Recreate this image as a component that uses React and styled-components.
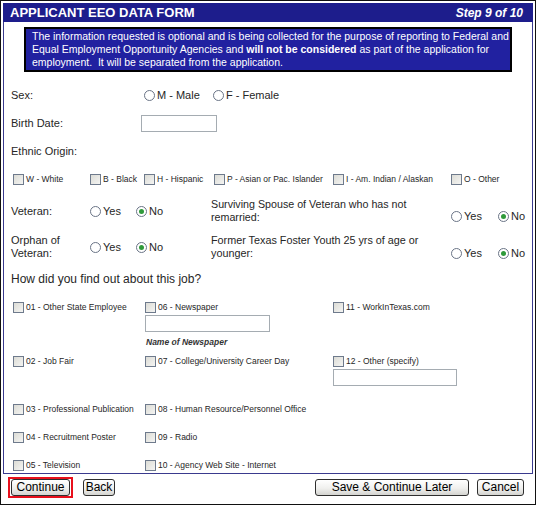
import React from 'react';
import styled, { createGlobalStyle } from 'styled-components';

const Global = createGlobalStyle`
  html, body { margin: 0; padding: 0; background: #fff; }
  body { font-family: "Liberation Sans", Arial, sans-serif; color: #262626; }
  * { box-sizing: border-box; }
`;

const Frame = styled.div`
  width: 536px;
  height: 505px;
  border: 1px solid #111;
  padding: 2px 0 0 2px;
  display: flex;
  flex-direction: column;
`;

const Panel = styled.div`
  width: 530px;
  height: 471px;
  border: 1px solid #3a3a8e;
  border-top: none;
  display: flex;
  flex-direction: column;
`;

const Header = styled.div`
  height: 19px;
  margin: 0 -1px;
  background: #1d1d8c;
  color: #fff;
  display: flex;
  align-items: center;
  justify-content: space-between;
  padding: 0 10px 0 7px;
`;

const Title = styled.span`
  font-size: 13px;
  font-weight: bold;
`;

const Step = styled.span`
  font-size: 12px;
  font-weight: bold;
  font-style: italic;
`;

const Notice = styled.div`
  margin: 5px 0 0 20px;
  width: 488px;
  border: 2px solid #000;
  background: #2121a0;
  color: #fff;
  font-size: 10.5px;
  line-height: 13px;
  padding: 1px 6px;
  white-space: nowrap;
`;

const Row = styled.div`
  height: ${(p) => p.$h || 28}px;
  margin-top: ${(p) => p.$mt || 0}px;
  display: flex;
  align-items: center;
  padding-left: ${(p) => p.$pl || 7}px;
  font-size: 11px;
`;

const Label = styled.span`
  width: ${(p) => p.$w}px;
  flex: none;
  line-height: 13px;
  font-size: ${(p) => p.$fs || 11}px;
`;

const Option = styled.label`
  width: ${(p) => (p.$w ? p.$w + 'px' : 'auto')};
  height: ${(p) => (p.$h ? p.$h + 'px' : 'auto')};
  flex: none;
  display: flex;
  align-items: center;
  gap: 2px;
  font-size: ${(p) => p.$fs || 11}px;
  margin-top: ${(p) => p.$mt || 0}px;
`;

const RadioDot = styled.span`
  width: 11px;
  height: 11px;
  border-radius: 50%;
  border: 1px solid #6a7486;
  background: #fff;
  display: inline-flex;
  align-items: center;
  justify-content: center;
  &::after {
    content: '';
    width: 5px;
    height: 5px;
    border-radius: 50%;
    background: ${(p) => (p.$on ? '#2f9a3a' : 'transparent')};
  }
`;

const Box = styled.span`
  width: 11px;
  height: 11px;
  flex: none;
  border: 1px solid #6e7a8c;
  background: linear-gradient(135deg, #dcdcd6, #f4f4f2);
`;

const TextBox = styled.span`
  display: block;
  width: ${(p) => p.$w}px;
  height: 17px;
  border: 1px solid #a5acb2;
  background: #fff;
`;

const Small = styled.span`
  font-size: 8.5px;
`;

const SourceGrid = styled.div`
  margin-top: 6px;
  padding-left: 9px;
  display: grid;
  grid-template-columns: 132px 188px 1fr;
  grid-template-rows: 16px 38px 16px 32px 16px 28px 28px;
  align-items: end;
`;

const InputCell = styled.div`
  align-self: start;
  display: flex;
  flex-direction: column;
`;

const Caption = styled.span`
  margin-top: 5px;
  margin-left: 1px;
  font-size: 8.5px;
  font-weight: bold;
  font-style: italic;
  color: #333;
`;

const ButtonBar = styled.div`
  display: flex;
  align-items: center;
  padding: 3px 11px 0 5px;
`;

const Group = styled.div`
  display: flex;
  align-items: center;
  gap: ${(p) => p.$gap}px;
  margin-left: ${(p) => (p.$right ? 'auto' : '0')};
`;

const Highlight = styled.span`
  display: inline-flex;
  border: 2px solid #e8101c;
  padding: 0 1px;
`;

const Button = styled.button`
  width: ${(p) => p.$w}px;
  height: 17px;
  padding: 0;
  font-family: "Liberation Sans", Arial, sans-serif;
  font-size: 12px;
  line-height: 15px;
  color: #000;
  border: 1px solid #2e2e2e;
  border-radius: 3px;
  background: linear-gradient(#ffffff, #f0f0ee 55%, #d4d4d0);
`;

const Radio = ({ on, w, mt, children }) => (
  <Option $w={w} $mt={mt}>
    <RadioDot $on={on} />
    {children}
  </Option>
);

const Check = ({ w, children }) => (
  <Option $w={w} $h={16} $fs={8.5}>
    <Box />
    <Small>{children}</Small>
  </Option>
);

export default function App() {
  return (
    <>
      <Global />
      <Frame>
        <Panel>
          <Header>
            <Title>APPLICANT EEO DATA FORM</Title>
            <Step>Step 9 of 10</Step>
          </Header>
          <Notice>
            The information requested is optional and is being collected for the purpose of reporting to Federal and
            <br />
            Equal Employment Opportunity Agencies and <b>will not be considered</b> as part of the application for
            <br />
            employment.&nbsp; It will be separated from the application.
          </Notice>

          <Row $mt={9}>
            <Label $w={133}>Sex:</Label>
            <Radio w={69}>M - Male</Radio>
            <Radio>F - Female</Radio>
          </Row>
          <Row>
            <Label $w={130}>Birth Date:</Label>
            <TextBox $w={76} />
          </Row>
          <Row>
            <Label $w={130}>Ethnic Origin:</Label>
          </Row>
          <Row $pl={9}>
            <Check w={77}>W - White</Check>
            <Check w={54}>B - Black</Check>
            <Check w={70}>H - Hispanic</Check>
            <Check w={119}>P - Asian or Pac. Islander</Check>
            <Check w={118}>I - Am. Indian / Alaskan</Check>
            <Check>O - Other</Check>
          </Row>
          <Row $h={36}>
            <Label $w={79}>Veteran:</Label>
            <Radio w={46}>Yes</Radio>
            <Radio w={75} on>No</Radio>
            <Label $w={240} $fs={10.7}>
              Surviving Spouse of Veteran who has not
              <br />
              remarried:
            </Label>
            <Radio w={47} mt={10}>Yes</Radio>
            <Radio on mt={10}>No</Radio>
          </Row>
          <Row $h={36}>
            <Label $w={79}>
              Orphan of
              <br />
              Veteran:
            </Label>
            <Radio w={46}>Yes</Radio>
            <Radio w={75} on>No</Radio>
            <Label $w={240} $fs={10.8}>
              Former Texas Foster Youth 25 yrs of age or
              <br />
              younger:
            </Label>
            <Radio w={47} mt={12}>Yes</Radio>
            <Radio on mt={12}>No</Radio>
          </Row>
          <Row>
            <Label $w={300} $fs={12}>How did you find out about this job?</Label>
          </Row>

          <SourceGrid>
            <Check>01 - Other State Employee</Check>
            <Check>06 - Newspaper</Check>
            <Check>11 - WorkInTexas.com</Check>

            <div />
            <InputCell>
              <TextBox $w={125} />
              <Caption>Name of Newspaper</Caption>
            </InputCell>
            <div />

            <Check>02 - Job Fair</Check>
            <Check>07 - College/University Career Day</Check>
            <Check>12 - Other (specify)</Check>

            <div />
            <div />
            <InputCell>
              <TextBox $w={124} />
            </InputCell>

            <Check>03 - Professional Publication</Check>
            <Check>08 - Human Resource/Personnel Office</Check>
            <div />

            <Check>04 - Recruitment Poster</Check>
            <Check>09 - Radio</Check>
            <div />

            <Check>05 - Television</Check>
            <Check>10 - Agency Web Site - Internet</Check>
            <div />
          </SourceGrid>
        </Panel>

        <ButtonBar>
          <Group $gap={10}>
            <Highlight>
              <Button $w={59}>Continue</Button>
            </Highlight>
            <Button $w={32}>Back</Button>
          </Group>
          <Group $gap={8} $right>
            <Button $w={154}>Save &amp; Continue Later</Button>
            <Button $w={47}>Cancel</Button>
          </Group>
        </ButtonBar>
      </Frame>
    </>
  );
}
